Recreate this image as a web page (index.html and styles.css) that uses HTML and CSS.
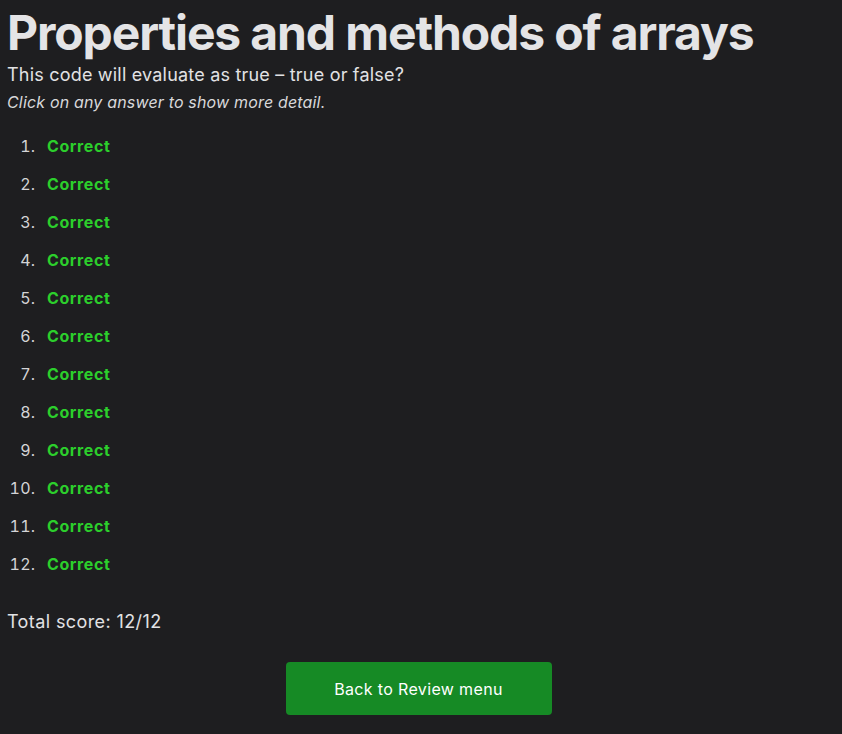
FILE: index.html
```html
<!DOCTYPE html>
<html lang="en">
<head>
<meta charset="utf-8">
<title>Properties and methods of arrays</title>
<link rel="stylesheet" href="styles.css">
</head>
<body>
<main class="page">
  <h1 class="title">Properties and methods of arrays</h1>
  <p class="question">This code will evaluate as true – true or false?</p>
  <p class="hint">Click on any answer to show more detail.</p>
  <ol class="answers">
    <li><span class="correct">Correct</span></li>
    <li><span class="correct">Correct</span></li>
    <li><span class="correct">Correct</span></li>
    <li><span class="correct">Correct</span></li>
    <li><span class="correct">Correct</span></li>
    <li><span class="correct">Correct</span></li>
    <li><span class="correct">Correct</span></li>
    <li><span class="correct">Correct</span></li>
    <li><span class="correct">Correct</span></li>
    <li><span class="correct">Correct</span></li>
    <li><span class="correct">Correct</span></li>
    <li><span class="correct">Correct</span></li>
  </ol>
  <p class="score">Total score: 12/12</p>
  <div class="actions">
    <button class="back-btn" type="button">Back to Review menu</button>
  </div>
</main>
</body>
</html>
```

FILE: styles.css
```css
html, body {
  margin: 0;
  padding: 0;
  background: #1e1e20;
}
body {
  font-family: Inter, "Noto Sans", sans-serif;
  color: #e2e2e4;
}
.page {
  padding: 4px 8px 0 7px;
}
.title {
  margin: 0;
  font-size: 48px;
  font-weight: 700;
  line-height: 58px;
  color: #e4e4e6;
  letter-spacing: -1.12px;
}
.question {
  margin: 2px 0 0 0;
  font-size: 18px;
  line-height: 22px;
  letter-spacing: 0.2px;
}
.hint {
  margin: 7px 0 0 0;
  font-size: 16px;
  font-style: italic;
  line-height: 19px;
  color: #d8d8da;
  letter-spacing: 0.17px;
}
.answers {
  margin: 15px 0 0 0;
  padding-left: 33px;
}
.answers li {
  padding-left: 7px;
  font-size: 16px;
  line-height: 38px;
  color: #d4d4d6;
  letter-spacing: 0.3px;
}
.correct {
  color: #2ccf2c;
  font-weight: 700;
  letter-spacing: 0.6px;
}
.score {
  margin: 28px 0 0 0;
  font-size: 18px;
  line-height: 22px;
  letter-spacing: 0.4px;
}
.actions {
  display: flex;
  justify-content: center;
  margin-top: 29px;
  padding-right: 4px;
}
.back-btn {
  width: 266px;
  height: 53px;
  border: none;
  border-radius: 4px;
  background: #168a25;
  color: #ffffff;
  font-family: Inter, "Noto Sans", sans-serif;
  font-size: 16px;
  letter-spacing: 0.35px;
}
```
